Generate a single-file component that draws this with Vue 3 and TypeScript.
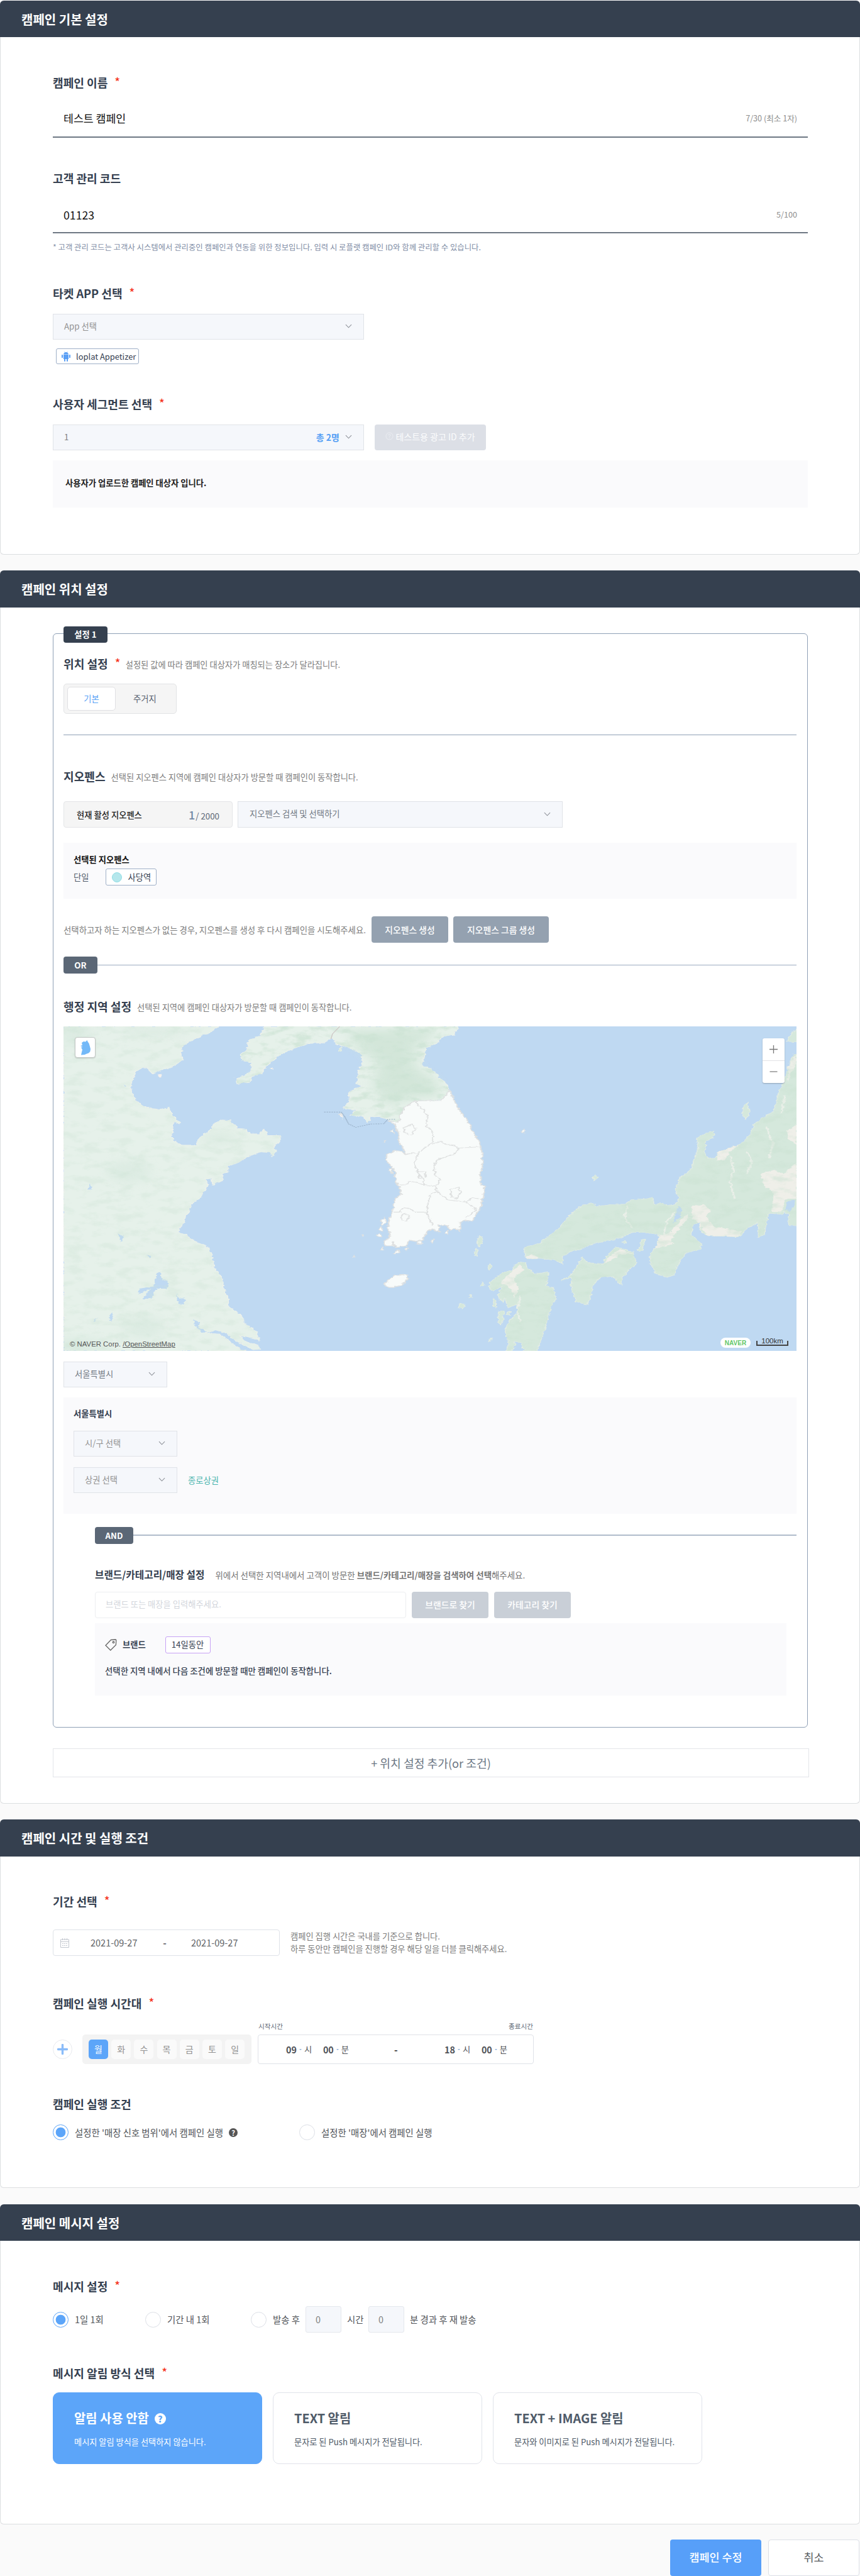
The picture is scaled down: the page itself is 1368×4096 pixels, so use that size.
<script setup lang="ts">
import { ref } from 'vue'

interface Day {
  label: string
  active: boolean
}

interface MessageType {
  title: string
  description: string
  help: boolean
}

const days = ref<Day[]>(
  ['월', '화', '수', '목', '금', '토', '일'].map((label, i) => ({ label, active: i === 0 })),
)

const messageTypes: MessageType[] = [
  { title: '알림 사용 안함', description: '메시지 알림 방식을 선택하지 않습니다.', help: true },
  { title: 'TEXT 알림', description: '문자로 된 Push 메시지가 전달됩니다.', help: false },
  { title: 'TEXT + IMAGE 알림', description: '문자와 이미지로 된 Push 메시지가 전달됩니다.', help: false },
]
const selectedType = ref(0)
</script>

<template>
  <main class="page">
    <section class="card basic">
      <header class="card-head">캠페인 기본 설정</header>
      <div class="card-body">
        <h3 class="label">캠페인 이름<i class="req">*</i></h3>
        <div class="line-input name-input"><span>테스트 캠페인</span><em>7/30 (최소 1자)</em></div>
        <h3 class="label code-label">고객 관리 코드</h3>
        <div class="line-input code-input"><span>01123</span><em>5/100</em></div>
        <p class="note">* 고객 관리 코드는 고객사 시스템에서 관리중인 캠페인과 연동을 위한 정보입니다. 입력 시 로플랫 캠페인 ID와 함께 관리할 수 있습니다.</p>
        <h3 class="label app-label">타켓 APP 선택<i class="req">*</i></h3>
        <div class="select wide">
          <span class="muted">App 선택</span>
          <svg class="chev" viewBox="0 0 12 7"><path d="M1 1l5 5 5-5" /></svg>
        </div>
        <div class="chip app-chip">
          <svg class="android" viewBox="0 0 14 16">
            <path d="M3 5h8v7H3zM0 5.400q1-1.200 2 0v4.200q-1 1.200-2 0zM12 5.400q1-1.200 2 0v4.200q-1 1.200-2 0zM4 11h2v4.300q-1 1.200-2 0zM8 11h2v4.300q-1 1.200-2 0zM3 4.500q.2-2.200 2-3L4.300.3l.5-.3.700 1.200q1.500-.4 3 0L9.200 0l.5.300L9 1.500q1.800.8 2 3z" />
          </svg>
          <span>loplat Appetizer</span>
        </div>
        <h3 class="label seg-label">사용자 세그먼트 선택<i class="req">*</i></h3>
        <div class="row seg-row">
          <div class="select wide">
            <span class="value">1</span>
            <b class="count">총 2명</b>
            <svg class="chev" viewBox="0 0 12 7"><path d="M1 1l5 5 5-5" /></svg>
          </div>
          <button class="btn disabled">
            <svg class="ring" viewBox="0 0 14 14"><circle cx="7" cy="7" r="6" /><path d="M5.200 5.600q0-1.800 1.800-1.800t1.800 1.600q0 1-1.800 1.900v1M7 9.600v1" /></svg>
            테스트용 광고 ID 추가
          </button>
        </div>
        <div class="panel user-panel">사용자가 업로드한 캠페인 대상자 입니다.</div>
      </div>
    </section>

    <section class="card place">
      <header class="card-head tall">캠페인 위치 설정</header>
      <div class="card-body">
        <div class="fieldset">
          <span class="badge">설정 1</span>
          <h3 class="label first">위치 설정<i class="req">*</i><small>설정된 값에 따라 캠페인 대상자가 매칭되는 장소가 달라집니다.</small></h3>
          <div class="toggle"><span class="on">기본</span><span class="off">주거지</span></div>
          <div class="divider"></div>
          <h3 class="label fence-label">지오펜스<small>선택된 지오펜스 지역에 캠페인 대상자가 방문할 때 캠페인이 동작합니다.</small></h3>
          <div class="row fence-row">
            <div class="quota"><span>현재 활성 지오펜스</span><span class="num"><b>1</b>/ 2000</span></div>
            <div class="select fence-select">
              <span>지오펜스 검색 및 선택하기</span>
              <svg class="chev" viewBox="0 0 12 7"><path d="M1 1l5 5 5-5" /></svg>
            </div>
          </div>
          <div class="panel fence-panel">
            <strong>선택된 지오펜스</strong>
            <div class="row single">
              <span>단일</span>
              <div class="chip fence-chip"><i class="dot"></i>사당역</div>
            </div>
          </div>
          <div class="row make-row">
            <span>선택하고자 하는 지오펜스가 없는 경우, 지오펜스를 생성 후 다시 캠페인을 시도해주세요.</span>
            <button class="btn slate make">지오펜스 생성</button>
            <button class="btn slate group">지오펜스 그룹 생성</button>
          </div>
          <div class="joiner or"><b>OR</b><i></i></div>
          <h3 class="label area-label">행정 지역 설정<small>선택된 지역에 캠페인 대상자가 방문할 때 캠페인이 동작합니다.</small></h3>

          <div class="map">
            <svg class="terrain" viewBox="27 34 1499 1443" preserveAspectRatio="none" color-interpolation-filters="sRGB">
              <defs>
                <filter id="coast" x="0" y="0" width="1" height="1">
                  <feTurbulence type="fractalNoise" baseFrequency="0.09" numOctaves="3" seed="4" />
                  <feDisplacementMap in="SourceGraphic" scale="10" xChannelSelector="R" yChannelSelector="G" />
                </filter>
                <filter id="relief" x="0" y="0" width="1" height="1">
                  <feTurbulence type="fractalNoise" baseFrequency="0.03" numOctaves="5" seed="11" result="n" />
                  <feColorMatrix in="n" values="0 0 0 0 .8  0 0 0 0 .89  0 0 0 0 .83  3.500 0 0 0 -1.600" result="c" />
                  <feComposite in="c" in2="SourceGraphic" operator="in" />
                </filter>
                <filter id="soft"><feGaussianBlur stdDeviation="12 18" /></filter>
                <clipPath id="mainland"><use href="#china" /></clipPath>
                <clipPath id="islands"><use href="#honshu" /><use href="#kyushu" /><use href="#shikoku" /></clipPath>
                <path id="china" d="M27 34H343L325 65 305 78 287 100 270 125 267 155 270 182 250 215 222 232 210 245 200 222 188 216 174 235 172 262 165 290 166 325 175 365 195 395 225 405 243 396 250 430 265 462 262 470 252 460 248 520 255 548 268 562H298L305 530 328 495 335 465 352 450 368 452 372 468 380 472 382 488 398 490 410 512H430L436 495 445 518 472 520 468 550 456 568 462 590 455 610 448 595 430 592 405 612 385 640 362 655 366 672 352 690V720L332 740 330 710 318 715 322 745 305 800 290 820 285 850 275 880 272 910 264 930V952L278 960 290 985 322 1015 330 1050 335 1100 350 1150 355 1200 363 1240V1275L390 1320 398 1355 420 1390 428 1430 400 1415 385 1408 400 1435 425 1455 430 1470 415 1472 385 1440 370 1418 362 1400 340 1385 318 1398 345 1402 365 1430 385 1465 400 1477H27Z" />
                <path id="north" d="M438 34L430 75 405 95 402 140 390 158 392 185 412 195 410 235 395 255 380 262 382 290 408 280 412 255 432 245 440 212 470 160 500 130 530 110 560 108 575 85 585 110 605 125 635 155 640 190 632 230 625 290 640 300 622 310 610 330 612 370 600 398 625 405 615 430 640 435 650 462 655 435 680 440 700 455 712 460 722 400 745 365 800 360 815 320 812 295 800 270 780 225 760 210 765 170 768 130 790 110 800 80 825 70 834 40V34Z" />
                <path id="honshu" d="M970 1015L1000 1000 1020 965 1040 930 1060 880 1078 845 1088 828 1110 822 1118 835 1150 825 1175 825 1190 805 1222 800 1232 792 1235 825 1250 820 1262 830 1278 825 1285 800 1278 755 1288 710 1310 670 1320 610 1325 570 1322 530 1340 510 1358 500 1355 530 1340 545 1338 600 1345 622 1360 620 1368 590 1410 560 1430 520 1440 470 1455 440 1480 410 1488 340 1500 280 1508 220 1520 160 1540 150V920L1512 920 1508 900 1512 870 1498 855 1500 870 1470 865 1465 900 1460 960 1448 970V905L1420 940 1410 970 1345 965 1330 945V905L1315 915 1310 960 1332 1000 1330 1025 1300 1040 1285 1090 1275 1140 1262 1150 1240 1135 1228 1090 1225 1050 1240 1010 1245 960 1215 950 1190 950 1165 975 1135 990 1110 1000 1090 1020 1065 1035 1050 1055 1048 1090 1030 1070 1000 1065 975 1070 970 1045Z" />
                <path id="kyushu" d="M962 1082L972 1085 975 1110 990 1135 1005 1130 1018 1125V1160L1012 1185 1028 1195 1034 1245 1025 1280 1015 1350 1008 1400 1000 1450 995 1477H968L962 1440 952 1435 945 1477H932L938 1440 930 1400 932 1370 945 1330 955 1310V1270L935 1285 930 1240 925 1260 915 1230 925 1190 905 1210 895 1190 905 1160 925 1130 945 1120 950 1095Z" />
                <path id="shikoku" d="M1045 1165L1065 1140 1080 1090 1088 1060 1100 1085 1130 1090 1140 1050 1155 1015 1175 1025 1192 1040 1198 1085 1185 1115 1170 1150 1168 1185 1150 1145 1125 1150 1108 1190 1105 1235 1098 1270 1075 1260 1066 1200 1065 1148Z" />
              </defs>
              <rect x="27" y="34" width="1499" height="1443" fill="#bfd9f2" />
              <g filter="url(#coast)">
                <g fill="#e6f1ea" stroke="#edf1eb" stroke-width="2">
                  <use href="#china" />
                  <use href="#north" />
                </g>
                <g fill="#d5e8dc" stroke="#e2ece3" stroke-width="2">
                  <use href="#honshu" />
                  <use href="#kyushu" />
                  <use href="#shikoku" />
                  <path d="M1540 34V105L1505 100 1518 60ZM1415 425L1420 385 1427 370 1425 395 1431 412 1422 445ZM872 1010L878 963 884 985 878 1012ZM867 1050L870 1022 876 1030 872 1056ZM1200 1032L1210 983 1216 980 1212 1030ZM835 1285L838 1265 847 1270 843 1290ZM1110 705L1114 695 1119 708 1112 720ZM895 1105L899 1090 903 1102 899 1115ZM880 1190L884 1170 888 1185ZM916 1345L918 1300 928 1300 924 1350 918 1365ZM932 1315L940 1300 940 1318ZM897 1440L900 1420 903 1425ZM905 1280L905 1245 912 1250 910 1285ZM1168 995L1175 985 1178 998ZM856 1240L862 1228 862 1240ZM590 145L595 125 597 145Z" />
                </g>
                <g clip-path="url(#islands)" fill="#efefe9">
                  <path d="M1312 835L1335 825 1350 850 1342 880 1358 925 1415 945 1405 970H1345L1322 900 1312 890ZM1452 690L1480 672 1500 690 1526 640V800L1505 800 1495 860 1475 860 1480 780 1460 740ZM1505 500L1526 470V560L1510 540ZM1300 870L1306 880 1268 985 1275 1000 1225 1030 1248 960 1262 960ZM1410 560L1390 590 1378 630 1365 630 1360 590ZM1510 210L1526 150V200L1508 280ZM930 1150L962 1090 968 1120 948 1150 958 1200 950 1240 938 1190 920 1175ZM1165 1025L1195 1045 1165 1050 1130 1095 1142 1060ZM985 1045L970 1065 1000 1070Z" />
                </g>
                <g fill="none" stroke="#e9efe8" stroke-width="4" clip-path="url(#islands)">
                  <path d="M1392 610L1398 680 1390 720 1400 800M1425 590L1435 640 1425 690M1180 830L1175 890 1190 930M1465 480L1478 560 1470 620M1502 340L1495 420M960 1230L955 1300 962 1350M1255 960L1262 900 1275 860" />
                </g>
                <g fill="#bfd9f2">
                  <path d="M1508 812L1524 806 1520 838 1512 860 1503 848ZM1284 835L1293 850 1287 885 1274 910 1278 870ZM218 1130L225 1130 228 1160 242 1170 238 1200 218 1200 205 1245 190 1245 205 1200 180 1225 182 1200 212 1190ZM258 1220L264 1245 275 1240V1270L262 1268ZM138 955L150 970 145 993ZM76 760L82 733 86 760ZM198 1050L207 1055 204 1068ZM122 1345L121 1320 127 1305 127 1335ZM88 1350L95 1325 92 1345ZM150 292L155 300 150 303ZM292 1335L305 1350 302 1370 320 1395 312 1395 296 1365Z" />
                </g>
                <g fill="#f4f0ec"><path d="M218 248L228 246 224 264ZM592 422L596 450 598 430ZM450 222L455 216 455 226Z" /></g>
              </g>
              <g clip-path="url(#mainland)" fill="#cfe4d8" opacity=".4" filter="url(#soft)">
                <ellipse cx="50" cy="70" rx="30" ry="60" />
                <ellipse cx="160" cy="680" rx="45" ry="50" />
                <ellipse cx="345" cy="530" rx="35" ry="25" />
                <ellipse cx="190" cy="1370" rx="40" ry="50" />
                <ellipse cx="60" cy="1460" rx="60" ry="45" />
                <ellipse cx="210" cy="60" rx="60" ry="18" />
              </g>
              <g filter="url(#relief)" opacity=".3"><use href="#china" /></g>
              <g filter="url(#relief)" opacity=".5"><use href="#honshu" /><use href="#kyushu" /><use href="#shikoku" /></g>
              <g fill="#cfe4d6" opacity=".8" filter="url(#soft)">
                <path d="M610 50H790L775 90 750 110 745 210 790 280 795 345 735 350 690 390 660 300 670 200 620 110Z" />
              </g>
              <g filter="url(#relief)" opacity=".7"><use href="#north" /></g>
              <g filter="url(#coast)" fill="#f8fbfa" stroke="#dfe1e1" stroke-width="3">
                <path d="M816 318L822 345 832 390 845 430 858 470 868 515 876 540 882 580 884 640 880 690V740L889 740 886 775 882 830 872 870 862 900 848 895 838 905V945L828 930 820 940 808 915 795 920V950L780 935 770 950 760 985 748 990 735 985 728 1010 708 1018 700 990 702 1010 685 1010 682 990 695 970 690 930 695 880 702 840 705 800 718 780 712 740 706 720 705 680 695 650 685 625 690 600 705 585 718 590 728 605 720 570 712 540 714 520 705 470 692 455 712 460 716 430 722 400 745 365 800 363Z" />
                <path d="M684 1180L692 1158 705 1142 728 1138 732 1155 718 1185 700 1195 688 1195Z" />
                <path fill="none" d="M745 365L752 385 765 410 772 440 768 480 782 495V550L765 575 752 600 740 595 728 605M782 555L800 545 812 562 828 565 835 575 876 570M835 575L825 605 805 615 790 630 785 660 788 700 797 710 793 740 780 745 765 740 762 710 752 690 745 640 752 600M712 740L728 738 735 722 752 730 765 740M788 745L790 768 775 790 772 830 770 860 745 860 735 845 722 840 715 860 702 860M790 768L805 790 812 805 850 815 862 795 882 803M770 860L775 890 782 920M850 815L872 850 850 885M722 485L740 470 746 490 738 515 725 510ZM818 760L835 748 840 770 832 800 822 795ZM716 880L724 866 736 880 728 898 718 894ZM752 680L765 680 768 705 755 710Z" />
                <path stroke-width="2" d="M676 900L682 885 688 905 680 920ZM670 940L676 925 680 945ZM668 968L674 955 678 970ZM674 1026L680 1018 682 1027ZM703 1045L710 1028 714 1040ZM636 968L638 958 640 968ZM618 1058L621 1054 622 1060ZM750 1000L755 985 762 1000ZM778 990L783 978 783 998ZM695 500L700 492 704 510ZM680 548L683 538 684 550ZM963 502L967 491 971 500 967 508ZM590 425L594 420 597 430ZM692 670L697 665 700 690ZM725 1022L732 1018 730 1030ZM805 955L812 940 815 955Z" />
              </g>
              <path d="M560 415H595L602 435 610 468 625 483 655 468 682 467 690 448 705 447" fill="none" stroke="#98afc6" stroke-width="2.500" stroke-dasharray="3 2" />
              <path d="M592 34L577 68 574 90" fill="none" stroke="#cfcac8" stroke-width="2" />
            </svg>
            <div class="home">
              <svg viewBox="0 0 16 24"><path d="M2 4l3-2 3 .5L10.500 0l1.500 3 1.500 2 1.500 5 1 4-.6 4-2.400 2.500-3 1-3.400 1.500L1 23.500 2 19l1-4-2-3.500 2.500-.5L0 9l3-1z" /></svg>
            </div>
            <div class="zoom">
              <svg viewBox="0 0 12 12"><path d="M6 0v12M0 6h12" /></svg>
              <svg viewBox="0 0 12 12"><path d="M0 6h12" /></svg>
            </div>
            <div class="copyright">© NAVER Corp. <u>/OpenStreetMap</u></div>
            <div class="naver">NAVER</div>
            <div class="scale">100km</div>
          </div>

          <div class="select city">
            <span>서울특별시</span>
            <svg class="chev" viewBox="0 0 12 7"><path d="M1 1l5 5 5-5" /></svg>
          </div>
          <div class="panel city-panel">
            <strong>서울특별시</strong>
            <div class="select sub1">
              <span class="muted">시/구 선택</span>
              <svg class="chev" viewBox="0 0 12 7"><path d="M1 1l5 5 5-5" /></svg>
            </div>
            <div class="row sub2">
              <div class="select">
                <span class="muted">상권 선택</span>
                <svg class="chev" viewBox="0 0 12 7"><path d="M1 1l5 5 5-5" /></svg>
              </div>
              <span class="market">종로상권</span>
            </div>
          </div>

          <div class="joiner and"><b>AND</b><i></i></div>
          <div class="brand">
            <h4 class="brand-title">브랜드/카테고리/매장 설정<small>위에서 선택한 지역내에서 고객이 방문한 <b>브랜드/카테고리/매장을 검색하여 선택</b>해주세요.</small></h4>
            <div class="row brand-row">
              <div class="search">브랜드 또는 매장을 입력해주세요.</div>
              <button class="btn pale">브랜드로 찾기</button>
              <button class="btn pale">카테고리 찾기</button>
            </div>
            <div class="panel brand-panel">
              <div class="row tag-row">
                <svg class="tag" viewBox="0 0 19 19"><path d="M9.500 1.500L17 1l.8.8-.4 7.700L8.800 18 1 10.200z" /><circle cx="13.500" cy="5.300" r="1.300" /></svg>
                <b>브랜드</b>
                <div class="chip period">14일동안</div>
              </div>
              <p>선택한 지역 내에서 다음 조건에 방문할 때만 캠페인이 동작합니다.</p>
            </div>
          </div>
        </div>
        <button class="add">+ 위치 설정 추가(or 조건)</button>
      </div>
    </section>

    <section class="card time">
      <header class="card-head tall">캠페인 시간 및 실행 조건</header>
      <div class="card-body">
        <h3 class="label term-label">기간 선택<i class="req">*</i></h3>
        <div class="row term-row">
          <div class="picker">
            <svg class="cal" viewBox="0 0 14 15"><path d="M.5 2h13v12.500H.5zM.5 5.500h13M3.500 0v3M7 0v3M10.500 0v3M3 8.500h2M6 8.500h2M9 8.500h2M3 11.500h2M6 11.500h2M9 11.500h2" /></svg>
            <span class="date">2021-09-27</span><span class="dash">-</span><span class="date">2021-09-27</span>
          </div>
          <p>캠페인 집행 시간은 국내를 기준으로 합니다.<br />하루 동안만 캠페인을 진행할 경우 해당 일을 더블 클릭해주세요.</p>
        </div>
        <h3 class="label hour-label">캠페인 실행 시간대<i class="req">*</i></h3>
        <div class="hour-caps"><span>시작시간</span><span>종료시간</span></div>
        <div class="row hour-row">
          <button class="plus"><svg viewBox="0 0 17 17"><path d="M8.500 1.500v14M1.500 8.500h14" /></svg></button>
          <div class="days"><span v-for="d in days" :key="d.label" :class="{ active: d.active }">{{ d.label }}</span></div>
          <div class="hours">
            <div class="clock"><b>09</b><i></i><span>시</span><b class="min">00</b><i></i><span>분</span></div>
            <b class="to">-</b>
            <div class="clock"><b>18</b><i></i><span>시</span><b class="min">00</b><i></i><span>분</span></div>
          </div>
        </div>
        <h3 class="label cond-label">캠페인 실행 조건</h3>
        <div class="row cond-row">
          <i class="radio on"></i><span class="cond-a">설정한 '매장 신호 범위'에서 캠페인 실행</span>
          <b class="help">?</b>
          <i class="radio second"></i><span>설정한 '매장'에서 캠페인 실행</span>
        </div>
      </div>
    </section>

    <section class="card message">
      <header class="card-head">캠페인 메시지 설정</header>
      <div class="card-body">
        <h3 class="label">메시지 설정<i class="req">*</i></h3>
        <div class="row msg-row">
          <i class="radio on"></i><span class="m1">1일 1회</span>
          <i class="radio"></i><span class="m2">기간 내 1회</span>
          <i class="radio"></i><span class="m3">발송 후</span>
          <div class="num-input">0</div><span class="m4">시간</span>
          <div class="num-input">0</div><span>분 경과 후 재 발송</span>
        </div>
        <h3 class="label type-label">메시지 알림 방식 선택<i class="req">*</i></h3>
        <div class="types">
          <div v-for="(t, i) in messageTypes" :key="t.title" class="type" :class="{ selected: i === selectedType }" @click="selectedType = i">
            <h4>{{ t.title }}<b v-if="t.help" class="help light">?</b></h4>
            <p>{{ t.description }}</p>
          </div>
        </div>
      </div>
    </section>

    <footer class="actions">
      <button class="submit">캠페인 수정</button>
      <button class="cancel">취소</button>
    </footer>
  </main>
</template>

<style>
body {
  background: #fafafa;
}
</style>

<style scoped>
* {
  box-sizing: border-box;
}
.page {
  width: 1368px;
  height: 4096px;
  padding-top: 1px;
  overflow: hidden;
  background: #fafafa;
  color: #354050;
  font-family: "Noto Sans CJK KR", "Noto Sans", sans-serif;
  font-size: 13.300px;
  line-height: 20px;
  white-space: nowrap;
}
h3, h4, p {
  margin: 0;
}
i, em {
  font-style: normal;
}
button {
  font: inherit;
  padding: 0;
  border: 0;
}
.row {
  display: flex;
  align-items: center;
}
.card {
  background: #fff;
  border: 1px solid #dcdee0;
  border-top: 0;
  border-radius: 6px;
}
.basic { height: 881px; }
.place { height: 1961px; margin-top: 25px; }
.time { height: 586px; margin-top: 25px; }
.message { height: 509px; margin-top: 26px; }
.card-head {
  height: 58px;
  margin: 0 -1px;
  padding-left: 34px;
  background: #35404f;
  border-radius: 6px 6px 0 0;
  color: #fff;
  font-size: 20px;
  font-weight: 700;
  line-height: 59px;
}
.card-head.tall {
  height: 59px;
}
.card-body {
  padding: 58px 82px 0 83px;
}
.label {
  display: flex;
  align-items: center;
  height: 28px;
  font-size: 18.100px;
  font-weight: 700;
  line-height: 28px;
}
.label small {
  margin-left: 9px;
  padding-top: 4px;
  font-size: 13.250px;
  font-weight: 400;
  color: #7d7d7d;
}
.req {
  margin: -4px 0 0 11px;
  width: 8px;
  color: #f5331d;
  font-weight: 500;
}
.line-input {
  display: flex;
  align-items: center;
  justify-content: space-between;
  padding: 2px 17px 0;
  border-bottom: 2px solid #6d7783;
  color: #111;
  font-size: 17.300px;
}
.line-input em {
  color: #8e8e8e;
  font-size: 12.600px;
}
.name-input { height: 62px; margin-top: 12px; }
.code-input { height: 60px; margin-top: 14px; }
.code-input span { font-size: 17.700px; }
.code-label { margin-top: 50px; }
.note {
  margin-top: 12px;
  color: #7f8ea6;
  font-size: 12.380px;
}
.app-label { margin-top: 49px; }
.app-label + .select { margin-top: 19px; }
.select {
  display: flex;
  align-items: center;
  width: 165px;
  height: 41px;
  padding: 0 18px 2px 17px;
  background: #f5f7fb;
  border: 1px solid #e0e3e8;
  color: #717984;
}
.select.wide {
  width: 495px;
}
.muted {
  color: #929292;
}
.value {
  color: #808080;
}
.chev {
  width: 11px;
  height: 7px;
  margin-left: auto;
  fill: none;
  stroke: #8b8f96;
  stroke-width: 1.100;
}
.count {
  margin-left: auto;
  margin-right: 9px;
  color: #559ff5;
  font-size: 14px;
}
.count + .chev {
  margin-left: 0;
}
.chip {
  display: flex;
  align-items: center;
  background: #fff;
  border: 1px solid #9fb0c8;
  border-radius: 3px;
}
.app-chip {
  width: 132px;
  height: 25px;
  margin: 14px 0 0 5px;
  padding-left: 8px;
  font-size: 12.900px;
}
.android {
  width: 14px;
  height: 16px;
  margin-right: 9px;
  fill: #5a9ff5;
}
.seg-label { margin-top: 49px; }
.seg-row { margin-top: 19px; gap: 17px; }
.btn {
  display: flex;
  align-items: center;
  justify-content: center;
  height: 42px;
  border-radius: 4px;
  color: #fff;
  font-size: 13.800px;
  font-weight: 500;
}
.btn.disabled {
  width: 177px;
  height: 41px;
  padding-bottom: 4px;
  background: #dcdfe6;
  color: #fbfcfd;
  font-size: 14px;
  font-weight: 400;
}
.ring {
  width: 13px;
  height: 13px;
  margin-right: 3px;
  fill: none;
  stroke: #eceef2;
}
.panel {
  background: #fafafc;
}
.user-panel {
  height: 75px;
  margin-top: 16px;
  padding-left: 20px;
  color: #222;
  font-weight: 700;
  line-height: 72px;
}

.place .card-body {
  padding-top: 41px;
}
.fieldset {
  position: relative;
  width: 1201px;
  height: 1740px;
  padding: 33px 17px 0 16px;
  border: 1px solid #8fa0b6;
  border-radius: 6px;
}
.badge {
  position: absolute;
  top: -12px;
  left: 16px;
  width: 70px;
  height: 26px;
  border-radius: 4px;
  background: #35404f;
  color: #fff;
  font-weight: 700;
  line-height: 25px;
  text-align: center;
}
.toggle {
  display: flex;
  width: 180px;
  height: 48px;
  margin-top: 18px;
  padding: 4px 5px;
  background: #f5f5f5;
  border: 1px solid #e2e3e5;
  border-radius: 5px;
  color: #55606e;
  line-height: 36px;
}
.toggle .on {
  width: 77px;
  height: 38px;
  background: #fff;
  border: 1px solid #e0e0e3;
  border-radius: 5px;
  color: #5aa2f5;
  text-align: center;
}
.toggle .off {
  margin-left: 28px;
  line-height: 38px;
}
.divider {
  height: 1px;
  margin-top: 33px;
  background: #8fa0b6;
}
.fence-label { margin-top: 51px; }
.fence-row { margin-top: 26px; gap: 8px; }
.quota {
  display: flex;
  align-items: center;
  width: 269px;
  height: 42px;
  padding: 2px 20px 0 20px;
  background: #f5f5f5;
  border: 1px solid #e4e5e8;
  border-radius: 4px;
  color: #222;
  font-weight: 500;
}
.num {
  margin-left: auto;
  color: #5d6876;
  font-weight: 400;
}
.num b {
  margin-right: 1px;
  color: #7389a6;
  font-size: 18px;
  font-weight: 500;
}
.fence-select {
  width: 517px;
  height: 42px;
  padding-left: 18px;
}
.fence-panel {
  height: 89px;
  margin-top: 24px;
  padding: 17px 16px 0;
  color: #111;
}
.fence-panel strong {
  display: block;
}
.single {
  margin-top: 4px;
  color: #55606e;
}
.fence-chip {
  width: 81px;
  height: 27px;
  margin-left: 27px;
  padding-left: 9px;
  color: #354050;
}
.dot {
  width: 16px;
  height: 16px;
  margin-right: 9px;
  border: 1px solid #8fdde5;
  border-radius: 50%;
  background: #b5e7ec;
}
.make-row {
  height: 42px;
  margin-top: 28px;
  color: #7d7d7d;
}
.make-row > span {
  width: 490px;
  font-size: 13.400px;
}
.slate { background: #94a1b0; }
.make { width: 122px; }
.group { width: 152px; margin-left: 8px; }
.joiner {
  display: flex;
  height: 27px;
}
.joiner b {
  width: 54px;
  border-radius: 4px;
  background: #5b6776;
  color: #fff;
  line-height: 27px;
  text-align: center;
}
.joiner i {
  flex: 1;
  height: 1px;
  margin-top: 13px;
  background: #9babc0;
}
.or { margin-top: 22px; }
.and { margin: 21px 0 0 50px; }
.and b { width: 61px; }
.and i { height: 2px; margin-top: 12px; background: #b0bccb; }
.area-label { margin-top: 38px; }

.map {
  position: relative;
  height: 516px;
  margin-top: 18px;
  overflow: hidden;
}
.terrain {
  display: block;
  width: 100%;
  height: 100%;
}
.home {
  position: absolute;
  top: 17px;
  left: 18px;
  width: 33px;
  height: 33px;
  padding: 4px 8px;
  background: #fff;
  border: 1px solid #c3c8c5;
  border-radius: 4px;
  box-shadow: 0 1px 2px rgba(0, 0, 0, .15);
}
.home svg {
  display: block;
  width: 16px;
  height: 24px;
  fill: #73b9f8;
}
.zoom {
  position: absolute;
  top: 19px;
  right: 19px;
  width: 35px;
  height: 71px;
  background: #fff;
  border-radius: 3px;
  box-shadow: 0 1px 2px rgba(0, 0, 0, .25);
}
.zoom svg {
  display: block;
  width: 35px;
  height: 35px;
  padding: 11px;
  fill: none;
  stroke: #777;
  stroke-width: 1.200;
}
.zoom svg + svg {
  border-top: 1px solid #e3e3e6;
}
.copyright {
  position: absolute;
  bottom: 1px;
  left: 10px;
  color: #555;
  font-family: "Liberation Sans", sans-serif;
  font-size: 11.400px;
}
.naver {
  position: absolute;
  right: 73px;
  bottom: 5px;
  width: 48px;
  height: 16px;
  border-radius: 8px;
  background: #fff;
  color: #62c768;
  font-family: "Liberation Sans", sans-serif;
  font-size: 10px;
  font-weight: 700;
  line-height: 17px;
  text-align: center;
}
.scale {
  position: absolute;
  right: 13px;
  bottom: 8px;
  width: 51px;
  height: 8px;
  border: 2px solid #444;
  border-top: 0;
  color: #333;
  font-family: "Liberation Sans", sans-serif;
  font-size: 11.500px;
  line-height: 0;
  text-align: center;
}
.city { margin-top: 17px; }
.city-panel {
  height: 185px;
  margin-top: 16px;
  padding: 16px 16px 0;
}
.city-panel strong {
  display: block;
}
.sub1 { margin-top: 17px; }
.sub2 { margin-top: 17px; gap: 17px; }
.market { color: #4cb5ae; }
.brand {
  margin: 35px 16px 0 50px;
}
.brand-title {
  display: flex;
  align-items: center;
  height: 28px;
  font-size: 15.700px;
}
.brand-title small {
  margin-left: 17px;
  color: #757575;
  font-size: 13.450px;
  font-weight: 400;
  white-space: pre;
}
.brand-title small b {
  font-weight: 700;
}
.brand-row { margin-top: 13px; gap: 9px; }
.search {
  width: 495px;
  height: 42px;
  padding-left: 16px;
  border: 1px solid #eceef0;
  border-radius: 4px;
  color: #d3d6dc;
  line-height: 38px;
}
.pale { width: 122px; background: #c9cfd7; padding-bottom: 2px; }
.brand-panel {
  height: 115px;
  margin-top: 8px;
  padding: 20px 16px 0;
}
.tag-row { height: 28px; }
.tag {
  width: 19px;
  height: 19px;
  margin-right: 9px;
  fill: none;
  stroke: #666;
  stroke-width: 1.300;
}
.period {
  width: 72px;
  height: 27px;
  margin-left: 31px;
  padding-left: 9px;
  border-color: #c7a2f5;
}
.brand-panel p {
  margin-top: 17px;
  font-size: 13.400px;
  font-weight: 500;
}
.add {
  display: block;
  width: 1203px;
  height: 46px;
  margin-top: 33px;
  background: #fff;
  border: 1px solid #e3e5e9;
  color: #6b7684;
  font-size: 18.200px;
}

.term-label { margin-top: -1px; }
.term-row { margin-top: 31px; height: 42px; }
.term-row p {
  margin-left: 17px;
  color: #7d7d7d;
  font-size: 13.250px;
}
.picker {
  display: flex;
  align-items: center;
  width: 361px;
  height: 42px;
  padding-left: 11px;
  border: 1px solid #dfe2e8;
  border-radius: 4px;
  color: #606266;
}
.cal {
  width: 14px;
  height: 15px;
  margin-right: 34px;
  fill: none;
  stroke: #c3c7cf;
}
.picker .date { width: 76px; font-size: 14.500px; }
.picker .dash { width: 84px; text-align: center; font-size: 15px; font-weight: 700; }
.hour-label { margin-top: 61px; }
.hour-caps {
  display: flex;
  justify-content: space-between;
  width: 437px;
  margin: 14px 0 0 327px;
  color: #5e6875;
  font-size: 10.600px;
  line-height: 18px;
}
.hour-row { margin-top: 4px; }
.plus {
  display: flex;
  align-items: center;
  justify-content: center;
  width: 31px;
  height: 31px;
  border: 1px solid #e8eaee;
  border-radius: 50%;
  background: #fff;
}
.plus svg {
  width: 17px;
  height: 17px;
  stroke: #8abcf9;
  stroke-width: 3.400;
  stroke-linecap: round;
}
.days {
  display: flex;
  gap: 5.200px;
  height: 47px;
  margin-left: 16px;
  padding: 8px 10px;
  width: 269px;
  border-radius: 5px;
  background: #f3f3f3;
}
.days span {
  width: 31px;
  height: 31px;
  border-radius: 5px;
  background: #fafafa;
  color: #929292;
  font-size: 14px;
  line-height: 30px;
  text-align: center;
}
.days .active {
  background: #5ca5f9;
  color: #fff;
}
.hours {
  display: flex;
  align-items: center;
  width: 439px;
  height: 47px;
  margin-left: 10px;
  padding-left: 44px;
  border: 1px solid #dfe2e8;
  border-radius: 4px;
  color: #505358;
}
.clock {
  display: flex;
  align-items: center;
  width: 98px;
}
.clock b {
  width: 17px;
  font-size: 14.300px;
}
.clock .min {
  margin-left: 18px;
}
.clock i {
  width: 0;
  margin: 0 4px;
  border: 2px solid transparent;
  border-top: 2px solid #8fb0d8;
  border-bottom: 0;
}
.clock span {
  width: 12px;
}
.to {
  width: 8px;
  margin: 0 72px 0 74px;
  color: #333;
  font-size: 15px;
}
.cond-label { margin-top: 49px; }
.cond-row { height: 25px; margin-top: 19px; color: #505358; font-size: 14.400px; }
.radio {
  width: 25px;
  height: 25px;
  margin-right: 10px;
  border: 1px solid #dcdfe6;
  border-radius: 50%;
  background: #fff;
}
.radio.on {
  border: 1.500px solid #5ca5f9;
  background: radial-gradient(circle, #5ca5f9 7.500px, #fff 8.200px);
}
.help {
  width: 14px;
  height: 14px;
  border-radius: 50%;
  background: #555;
  color: #fff;
  font-size: 11px;
  line-height: 14px;
  text-align: center;
}
.cond-a { width: 245px; }
.second { margin-left: 98px; }

.msg-row { height: 42px; margin-top: 18px; color: #505358; font-size: 14.400px; }
.m1 { width: 112px; }
.m2 { width: 133px; }
.m3 { width: 52px; }
.m4 { width: 34px; }
.num-input {
  width: 57px;
  height: 42px;
  margin-right: 9px;
  padding-left: 15px;
  background: #f5f7fb;
  border: 1px solid #e4e7ed;
  border-radius: 3px;
  color: #808080;
  line-height: 39px;
}
.type-label { margin-top: 50px; }
.types {
  display: flex;
  gap: 17px;
  margin-top: 17px;
}
.type {
  width: 333px;
  height: 114px;
  padding: 25px 33px;
  border: 1px solid #e0e3ea;
  border-radius: 10px;
  color: #4f5b69;
}
.type h4 {
  display: flex;
  align-items: center;
  height: 30px;
  font-size: 19.900px;
}
.type p {
  margin-top: 13px;
  font-size: 13.200px;
  line-height: 20px;
}
.type.selected {
  border-color: #5ca5f9;
  background: #5ca5f9;
  color: #fff;
}
.help.light {
  width: 18px;
  height: 18px;
  margin: 2px 0 0 9px;
  background: #fff;
  color: #5ca5f9;
  font-size: 14px;
  line-height: 18px;
}
.actions {
  display: flex;
  justify-content: flex-end;
  gap: 11px;
  margin-top: 24px;
  padding-right: 1px;
}
.actions button {
  width: 145px;
  height: 58px;
  padding-bottom: 3px;
  border-radius: 4px;
  font-size: 17.400px;
}
.submit {
  background: #579ff9;
  color: #fff;
  font-weight: 500;
}
.cancel {
  background: #fff;
  border: 1px solid #dcdfe6;
  color: #55585e;
}
</style>
